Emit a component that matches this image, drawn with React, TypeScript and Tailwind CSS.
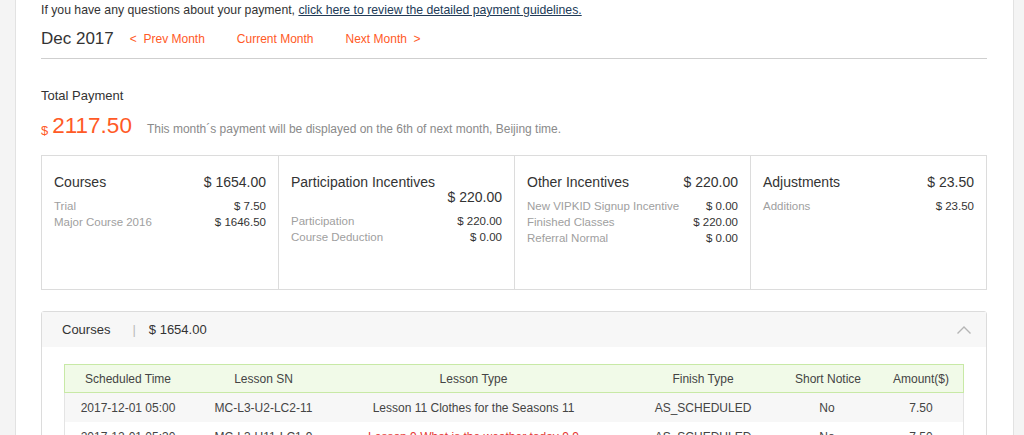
import React from 'react';

type Line = { label: string; value: string };
type Card = { title: string; total: string; lines: Line[]; wrap?: boolean };

const cards: Card[] = [
  {
    title: 'Courses',
    total: '$ 1654.00',
    lines: [
      { label: 'Trial', value: '$ 7.50' },
      { label: 'Major Course 2016', value: '$ 1646.50' },
    ],
  },
  {
    title: 'Participation Incentives',
    total: '$ 220.00',
    wrap: true,
    lines: [
      { label: 'Participation', value: '$ 220.00' },
      { label: 'Course Deduction', value: '$ 0.00' },
    ],
  },
  {
    title: 'Other Incentives',
    total: '$ 220.00',
    lines: [
      { label: 'New VIPKID Signup Incentive', value: '$ 0.00' },
      { label: 'Finished Classes', value: '$ 220.00' },
      { label: 'Referral Normal', value: '$ 0.00' },
    ],
  },
  {
    title: 'Adjustments',
    total: '$ 23.50',
    lines: [{ label: 'Additions', value: '$ 23.50' }],
  },
];

const rows = [
  {
    time: '2017-12-01 05:00',
    sn: 'MC-L3-U2-LC2-11',
    type: 'Lesson 11 Clothes for the Seasons 11',
    finish: 'AS_SCHEDULED',
    notice: 'No',
    amount: '7.50',
    red: false,
  },
  {
    time: '2017-12-01 05:30',
    sn: 'MC-L3-U11-LC1-9',
    type: 'Lesson 9 What is the weather today 9.9',
    finish: 'AS_SCHEDULED',
    notice: 'No',
    amount: '7.50',
    red: true,
  },
];

const cols = 'grid grid-cols-[126px_145px_275px_184px_64px_106px]';

export default function App() {
  return (
    <div
      className="flex h-[435px] w-[1024px] overflow-hidden bg-[#f4f4f4] text-[#333]"
      style={{ fontFamily: '"Liberation Sans", Arial, sans-serif' }}
    >
      <div className="w-[16px] shrink-0 border-r border-[#e2e2e2]" />
      <div className="flex-1 bg-white pl-[25px] pr-[23px]">
        <div className="w-[946px]">
          <div className="pt-[2px] text-[12.25px] leading-[16px] text-[#333]">
            If you have any questions about your payment,{' '}
            <span className="text-[#223b57] underline">click here to review the detailed payment guidelines.</span>
          </div>

          <div className="mt-[9px] flex items-center h-[24px]">
            <span className="text-[17px] text-[#333]">Dec 2017</span>
            <span className="ml-[16px] text-[12px] text-[#ff5a26]">&lt;&nbsp;&nbsp;Prev Month</span>
            <span className="ml-[32px] text-[12px] text-[#ff5a26]">Current Month</span>
            <span className="ml-[32px] text-[12px] text-[#ff5a26]">Next Month&nbsp;&nbsp;&gt;</span>
          </div>
          <div className="mt-[7px] h-px bg-[#cfcfcf]" />

          <div className="mt-[29px] text-[13px] leading-[16px] text-[#333]">Total Payment</div>
          <div className="mt-[9px] flex items-end h-[26px]">
            <span className="text-[13px] leading-[16px] text-[#ff5a26] mr-[4px]">$</span>
            <span className="text-[22.5px] leading-[26px] text-[#ff5a26]">2117.50</span>
            <span className="ml-[15px] mb-[3px] text-[12px] leading-[14px] text-[#8a8a8a]">
              This month´s payment will be displayed on the 6th of next month, Beijing time.
            </span>
          </div>

          <div className="mt-[16px] grid h-[135px] grid-cols-4 border border-[#dcdcdc]">
            {cards.map((c, i) => (
              <div key={c.title} className={`px-[12px] pt-[19px] ${i > 0 ? 'border-l border-[#dcdcdc]' : ''}`}>
                <div className={`flex justify-between text-[14px] leading-[15px] text-[#333] ${c.wrap ? 'flex-col' : ''}`}>
                  <span>{c.title}</span>
                  <span className={c.wrap ? 'self-end' : ''}>{c.total}</span>
                </div>
                <div className="mt-[8px]">
                  {c.lines.map(l => (
                    <div key={l.label} className="flex justify-between text-[11.5px] leading-[16px]">
                      <span className="text-[#a0a0a0]">{l.label}</span>
                      <span className="text-[#333]">{l.value}</span>
                    </div>
                  ))}
                </div>
              </div>
            ))}
          </div>

          <div className="mt-[21px] rounded-[3px] border border-[#dcdcdc]">
            <div className="flex h-[35px] items-center bg-[#f7f7f7] pl-[20px] pr-[14px] text-[13px] text-[#333]">
              <span>Courses</span>
              <span className="ml-[22px] text-[#bbb]">|</span>
              <span className="ml-[13px]">$ 1654.00</span>
              <svg className="ml-auto" width="16" height="10" viewBox="0 0 16 10" fill="none">
                <path d="M1.5 8.5 L8 2 L14.5 8.5" stroke="#b5b5b5" strokeWidth="1.4" />
              </svg>
            </div>
            <div className="px-[22px] pt-[17px] pb-[20px]">
              <div className="border-x border-b border-[#e4e4e4]">
                <div className={`${cols} h-[29px] items-center border border-[#c8e9a6] bg-[#f1fae8] -mx-px text-[12px] text-[#444]`}>
                  <span className="text-center">Scheduled Time</span>
                  <span className="text-center">Lesson SN</span>
                  <span className="text-center">Lesson Type</span>
                  <span className="text-center">Finish Type</span>
                  <span className="text-center whitespace-nowrap">Short Notice</span>
                  <span className="pl-[18px] text-center">Amount($)</span>
                </div>
                {rows.map((r, i) => (
                  <div
                    key={r.time}
                    className={`${cols} h-[29px] items-center text-[12px] text-[#444] ${i % 2 === 0 ? 'bg-[#f7f7f7]' : 'bg-white'}`}
                  >
                    <span className="text-center">{r.time}</span>
                    <span className="text-center">{r.sn}</span>
                    <span className={`text-center ${r.red ? 'text-[#e53935]' : ''}`}>{r.type}</span>
                    <span className="text-center">{r.finish}</span>
                    <span className="text-center">{r.notice}</span>
                    <span className="pl-[18px] text-center">{r.amount}</span>
                  </div>
                ))}
              </div>
            </div>
          </div>
        </div>
      </div>
      <div className="w-[11px] shrink-0 border-l border-[#e2e2e2]" />
    </div>
  );
}
